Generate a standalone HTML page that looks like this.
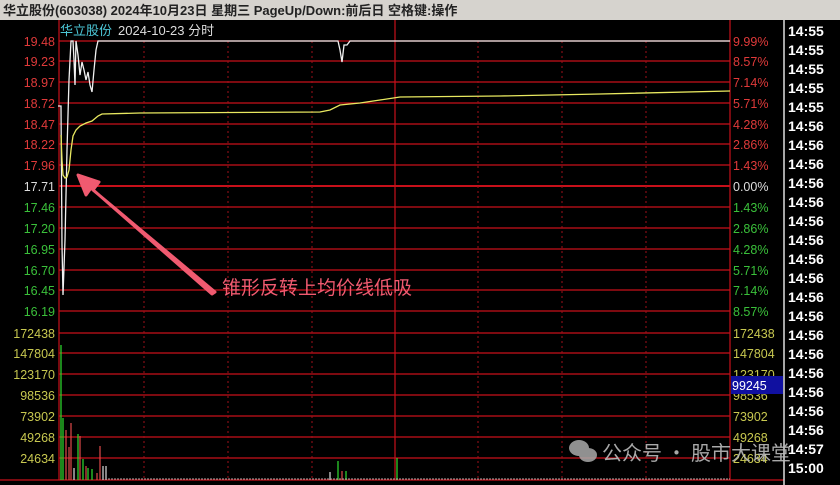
<!DOCTYPE html>
<html><head><meta charset="utf-8"><style>
body{margin:0;width:840px;height:485px;overflow:hidden;background:#000;font-family:"Liberation Sans","Noto Sans CJK SC",sans-serif}
</style></head><body>
<svg width="840" height="485" xmlns="http://www.w3.org/2000/svg" style="position:absolute;left:0;top:0">
<rect width="840" height="485" fill="#000"/>
<rect width="840" height="20" fill="#d6d3ce"/>
<text x="3" y="15" font-size="13" font-weight="bold" fill="#222" font-family="Liberation Sans,Noto Sans CJK SC,sans-serif">华立股份(603038)  2024年10月23日 星期三  PageUp/Down:前后日 空格键:操作</text>
<text x="60" y="35" font-size="13" fill="#4cc8d8" font-family="Liberation Sans,Noto Sans CJK SC,sans-serif">华立股份</text>
<text x="118" y="35" font-size="13" fill="#ddd" font-family="Liberation Sans,Noto Sans CJK SC,sans-serif">2024-10-23 分时</text>
<g stroke="#c8101a" stroke-width="1.2">
<line x1="59" y1="41" x2="730" y2="41"/><line x1="59" y1="61" x2="730" y2="61"/><line x1="59" y1="82" x2="730" y2="82"/><line x1="59" y1="103" x2="730" y2="103"/><line x1="59" y1="124" x2="730" y2="124"/><line x1="59" y1="144" x2="730" y2="144"/><line x1="59" y1="165" x2="730" y2="165"/><line x1="59" y1="186" x2="730" y2="186" stroke-width="2"/><line x1="59" y1="207" x2="730" y2="207"/><line x1="59" y1="228" x2="730" y2="228"/><line x1="59" y1="249" x2="730" y2="249"/><line x1="59" y1="270" x2="730" y2="270"/><line x1="59" y1="290" x2="730" y2="290"/><line x1="59" y1="311" x2="730" y2="311"/>
<line x1="59" y1="333" x2="730" y2="333"/><line x1="59" y1="353" x2="730" y2="353"/><line x1="59" y1="374" x2="730" y2="374"/><line x1="59" y1="395" x2="730" y2="395"/><line x1="59" y1="416" x2="730" y2="416"/><line x1="59" y1="437" x2="730" y2="437"/><line x1="59" y1="458" x2="730" y2="458"/>
<line x1="59" y1="20" x2="59" y2="480"/><line x1="395" y1="20" x2="395" y2="480"/><line x1="730" y1="20" x2="730" y2="480"/><line x1="0" y1="480" x2="784" y2="480"/>
</g>
<g stroke="#a0101a" stroke-width="1" stroke-dasharray="2,3">
<line x1="144" y1="41" x2="144" y2="480"/><line x1="228" y1="41" x2="228" y2="480"/><line x1="312" y1="41" x2="312" y2="480"/><line x1="478" y1="41" x2="478" y2="480"/><line x1="562" y1="41" x2="562" y2="480"/><line x1="646" y1="41" x2="646" y2="480"/>
</g>
<line x1="784" y1="20" x2="784" y2="485" stroke="#ddd" stroke-width="1.5"/>
<g font-size="12.5" text-anchor="end" font-family="Liberation Sans,sans-serif">
<g fill="#e03a3a"><text x="55" y="46">19.48</text><text x="55" y="66">19.23</text><text x="55" y="87">18.97</text><text x="55" y="108">18.72</text><text x="55" y="129">18.47</text><text x="55" y="149">18.22</text><text x="55" y="170">17.96</text></g>
<text x="55" y="191" fill="#ddd">17.71</text>
<g fill="#3ac03a"><text x="55" y="212">17.46</text><text x="55" y="233">17.20</text><text x="55" y="254">16.95</text><text x="55" y="275">16.70</text><text x="55" y="295">16.45</text><text x="55" y="316">16.19</text></g>
<g fill="#c8c850"><text x="55" y="338">172438</text><text x="55" y="358">147804</text><text x="55" y="379">123170</text><text x="55" y="400">98536</text><text x="55" y="421">73902</text><text x="55" y="442">49268</text><text x="55" y="463">24634</text></g>
</g>
<g font-size="12.5" font-family="Liberation Sans,sans-serif">
<g fill="#e03a3a"><text x="733" y="46">9.99%</text><text x="733" y="66">8.57%</text><text x="733" y="87">7.14%</text><text x="733" y="108">5.71%</text><text x="733" y="129">4.28%</text><text x="733" y="149">2.86%</text><text x="733" y="170">1.43%</text></g>
<text x="733" y="191" fill="#ddd">0.00%</text>
<g fill="#3ac03a"><text x="733" y="212">1.43%</text><text x="733" y="233">2.86%</text><text x="733" y="254">4.28%</text><text x="733" y="275">5.71%</text><text x="733" y="295">7.14%</text><text x="733" y="316">8.57%</text></g>
<g fill="#c8c850"><text x="733" y="338">172438</text><text x="733" y="358">147804</text><text x="733" y="379">123170</text><text x="733" y="400">98536</text><text x="733" y="421">73902</text><text x="733" y="442">49268</text><text x="733" y="463">24634</text></g>
</g>
<rect x="731" y="376" width="52" height="18" fill="#1010a0"/>
<text x="732" y="390" font-size="12.5" fill="#fff" font-family="Liberation Sans,sans-serif">99245</text>
<g font-size="14" font-weight="bold" fill="#fff" font-family="Liberation Sans,sans-serif">
<text x="788" y="36">14:55</text><text x="788" y="55">14:55</text><text x="788" y="74">14:55</text><text x="788" y="93">14:55</text><text x="788" y="112">14:55</text><text x="788" y="131">14:56</text><text x="788" y="150">14:56</text><text x="788" y="169">14:56</text><text x="788" y="188">14:56</text><text x="788" y="207">14:56</text><text x="788" y="226">14:56</text><text x="788" y="245">14:56</text><text x="788" y="264">14:56</text><text x="788" y="283">14:56</text><text x="788" y="302">14:56</text><text x="788" y="321">14:56</text><text x="788" y="340">14:56</text><text x="788" y="359">14:56</text><text x="788" y="378">14:56</text><text x="788" y="397">14:56</text><text x="788" y="416">14:56</text><text x="788" y="435">14:56</text><text x="788" y="454">14:57</text><text x="788" y="473">15:00</text>
</g>
<polyline fill="none" stroke="#f0f0f0" stroke-width="1.3" points="58,106 61,106 62,245 63,295 65,240 67,150 69,80 71,41 73,41 74,60 75,85 76,41 78,55 80,75 82,62 84,70 86,80 88,72 90,85 92,92 94,70 96,50 98,41 338,41 340,50 342,62 344,45 347,45 350,41 730,41"/>
<polyline fill="none" stroke="#e8e860" stroke-width="1.3" points="61,135 62,160 63,175 65,178 67,177 69,170 71,150 73,136 76,130 80,126 86,123 92,121 98,116 102,114 140,113 320,112 330,110 340,105 360,103 380,100 400,97 500,96 600,94 730,91"/>
<g stroke-width="1.2">
<line x1="61" y1="480" x2="61" y2="345" stroke="#30e030"/><line x1="63" y1="480" x2="63" y2="418" stroke="#30e030"/>
<line x1="66" y1="480" x2="66" y2="430" stroke="#e04a4a"/><line x1="69" y1="480" x2="69" y2="447" stroke="#e04a4a"/><line x1="71" y1="480" x2="71" y2="423" stroke="#e04a4a"/>
<line x1="74" y1="480" x2="74" y2="468" stroke="#ddd"/><line x1="78" y1="480" x2="78" y2="434" stroke="#30e030"/><line x1="80" y1="480" x2="80" y2="436" stroke="#e04a4a"/>
<line x1="83" y1="480" x2="83" y2="459" stroke="#30e030"/><line x1="86" y1="480" x2="86" y2="466" stroke="#e04a4a"/><line x1="88" y1="480" x2="88" y2="468" stroke="#30e030"/><line x1="92" y1="480" x2="92" y2="469" stroke="#30e030"/><line x1="97" y1="480" x2="97" y2="473" stroke="#e04a4a"/><line x1="100" y1="480" x2="100" y2="446" stroke="#e04a4a"/><line x1="103" y1="480" x2="103" y2="466" stroke="#ddd"/><line x1="106" y1="480" x2="106" y2="466" stroke="#ddd"/>
<line x1="338" y1="480" x2="338" y2="461" stroke="#30e030"/><line x1="342" y1="480" x2="342" y2="471" stroke="#e04a4a"/><line x1="346" y1="480" x2="346" y2="471" stroke="#30e030"/><line x1="330" y1="480" x2="330" y2="472" stroke="#ddd"/><line x1="397" y1="480" x2="397" y2="458" stroke="#30e030"/>
</g>
<line x1="108" y1="479" x2="730" y2="479" stroke="#aaa" stroke-width="1" stroke-dasharray="2,1"/>
<path d="M215,292 L93,190 L99,182 L78,175 L86,195 L91,188 L212,294 Z" fill="#f05a70" stroke="#f05a70" stroke-width="3" stroke-linejoin="round"/>
<text x="222" y="294" font-size="19" fill="#f05a70" font-family="Noto Sans CJK SC,sans-serif">锥形反转上均价线低吸</text>
<g fill="#aaa" opacity="0.85"><ellipse cx="579" cy="448" rx="10" ry="8"/><ellipse cx="588" cy="455" rx="9" ry="7"/></g>
<text x="602" y="460" font-size="20" fill="#bbb" opacity="0.9" font-family="Noto Sans CJK SC,sans-serif">公众号 · 股市大课堂</text>
</svg>
</body></html>
